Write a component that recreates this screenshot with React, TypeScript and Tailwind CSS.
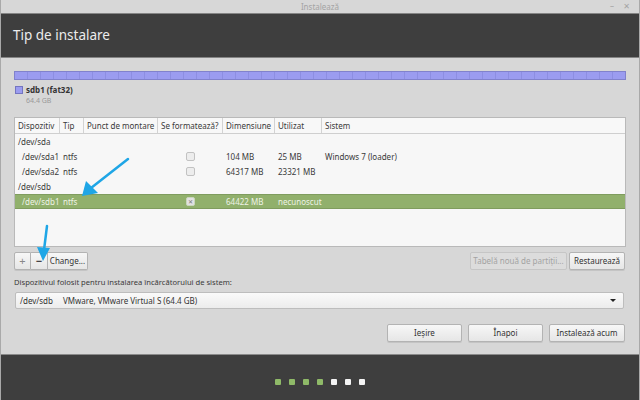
import React from "react";

const cols = [45, 24, 74, 65, 52, 47];

const heads = ["Dispozitiv", "Tip", "Punct de montare", "Se formatează?", "Dimensiune", "Utilizat", "Sistem"];

type Row = {
  dev: string;
  tip?: string;
  check?: boolean;
  size?: string;
  used?: string;
  sys?: string;
  selected?: boolean;
  disk?: boolean;
};

const rows: Row[] = [
  { dev: "/dev/sda", disk: true },
  { dev: "/dev/sda1", tip: "ntfs", check: true, size: "104 MB", used: "25 MB", sys: "Windows 7 (loader)" },
  { dev: "/dev/sda2", tip: "ntfs", check: true, size: "64317 MB", used: "23321 MB" },
  { dev: "/dev/sdb", disk: true },
  { dev: "/dev/sdb1", tip: "ntfs", check: true, size: "64422 MB", used: "necunoscut", selected: true },
];

const Btn = ({ children, className = "" }: { children: React.ReactNode; className?: string }) => (
  <div
    className={`flex items-center justify-center rounded-[2px] border border-[#b3b3b3] bg-gradient-to-b from-[#f7f7f7] to-[#e6e6e6] text-[8px] text-[#333] shadow-[0_1px_0_#c4c4c4] ${className}`}
  >
    {children}
  </div>
);

const App = () => {
  return (
    <div
      className="w-[640px] h-[400px] flex flex-col bg-[#d7d7d7] border-x border-[#a9a9a9] overflow-hidden relative"
      style={{ fontFamily: '"Noto Sans", "DejaVu Sans", sans-serif' }}
    >
      {/* title bar */}
      <div className="h-[13px] flex items-center justify-center relative text-[8px] text-[#a4a4a4]">
        Instalează
        <span className="absolute right-[25px] top-[0px] text-[8px]">–</span>
        <span className="absolute right-[9px] top-[0px] text-[8px]">✕</span>
      </div>

      {/* header */}
      <div className="h-[45px] bg-[#3e3e3e] border-y border-[#858585] flex items-center pl-[12px] text-[13.5px] text-[#ececec]">
        Tip de instalare
      </div>

      {/* content */}
      <div className="flex-1 flex flex-col px-[13px] pt-[13px]">
        <div className="h-[9px] border border-[#8182cc] bg-[repeating-linear-gradient(90deg,#9b9cf0_0px,#9b9cf0_12px,#8d8ee2_12px,#8d8ee2_13px)]" />

        <div className="flex items-start mt-[5px] ml-[1px]">
          <div className="w-[8px] h-[8px] mt-[1px] bg-[#9b9cf0] border border-[#7475c0]" />
          <div className="ml-[3px] flex flex-col">
            <span className="text-[8px] leading-[10px] font-bold text-[#333]">sdb1 (fat32)</span>
            <span className="text-[7px] leading-[11px] text-[#9a9a9a]">64.4 GB</span>
          </div>
        </div>

        {/* table */}
        <div className="mt-[11px] h-[130px] border border-[#b9b9b9] bg-[#f7f7f7] flex flex-col">
          <div className="h-[16px] flex border-b border-[#cfcfcf] bg-[#f8f8f8] text-[8px] text-[#3a3a3a]">
            {heads.map((h, i) => (
              <div
                key={h}
                className={`flex items-center pl-[3px] ${i < 6 ? "border-r border-[#d3d3d3]" : "flex-1"}`}
                style={i < 6 ? { width: cols[i] } : undefined}
              >
                {h}
              </div>
            ))}
          </div>
          {rows.map((r) => (
            <div
              key={r.dev}
              className={`h-[15px] flex items-center text-[8px] ${
                r.selected ? "bg-[#91b06c] text-[#eef3e6] border-y border-[#7f9c5e]" : "text-[#3a3a3a]"
              }`}
            >
              {r.disk ? (
                <div className="pl-[3px]">{r.dev}</div>
              ) : (
                <>
                  <div className="w-[45px] pl-[7px]">{r.dev}</div>
                  <div className="w-[24px] pl-[3px]">{r.tip}</div>
                  <div className="w-[74px]" />
                  <div className="w-[65px] flex justify-center">
                    <div
                      className={`w-[9px] h-[9px] rounded-[2px] border flex items-center justify-center text-[6px] leading-none ${
                        r.selected ? "border-[#c9d6bb] bg-[#e2e2e2] text-[#777]" : "border-[#c2c2c2] bg-[#ededed]"
                      }`}
                    >
                      {r.selected ? "✕" : ""}
                    </div>
                  </div>
                  <div className="w-[52px] pl-[3px]">{r.size}</div>
                  <div className="w-[47px] pl-[3px]">{r.used}</div>
                  <div className="flex-1 pl-[3px]">{r.sys}</div>
                </>
              )}
            </div>
          ))}
        </div>

        {/* tools row */}
        <div className="mt-[5px] flex items-center">
          <div className="flex h-[18px]">
            <Btn className="w-[17px] rounded-r-none text-[11px] text-[#888]">+</Btn>
            <Btn className="w-[17px] rounded-none border-l-0 text-[11px] font-bold text-[#444]">−</Btn>
            <Btn className="w-[40px] rounded-l-none border-l-0">Change...</Btn>
          </div>
          <div className="flex-1" />
          <div className="h-[18px] w-[97px] rounded-[2px] border border-[#c6c6c6] bg-[#dcdcdc] text-[8px] text-[#a3a3a3] flex items-center justify-center">
            Tabelă nouă de partiții...
          </div>
          <Btn className="ml-[2px] h-[18px] w-[56px] mr-[1px]">Restaurează</Btn>
        </div>

        <div className="mt-[6px] text-[7.6px] leading-[12px] text-[#3a3a3a]">
          Dispozitivul folosit pentru instalarea încărcătorului de sistem:
        </div>

        <div className="mt-[4px] mr-[2px] ml-[1px] h-[17px] rounded-[2px] border border-[#bdbdbd] bg-gradient-to-b from-[#fafafa] to-[#ececec] flex items-center pl-[4px] pr-[7px] text-[8px] text-[#333]">
          <span>/dev/sdb</span>
          <span className="ml-[10px]">VMware, VMware Virtual S (64.4 GB)</span>
          <div className="flex-1" />
          <div className="w-0 h-0 border-x-[3px] border-x-transparent border-t-[3px] border-t-[#222]" />
        </div>

        <div className="mt-[15px] flex justify-end gap-[6px] mr-[1px]">
          <Btn className="w-[75px] h-[18px]">Ieșire</Btn>
          <Btn className="w-[75px] h-[18px]">Înapoi</Btn>
          <Btn className="w-[76px] h-[18px] border-[#9cc57c]">Instalează acum</Btn>
        </div>
      </div>

      {/* footer */}
      <div className="h-[46px] bg-[#3e3e3e] border-t border-[#8a8a8a] flex items-center justify-center gap-[8px] pt-[8px]">
        {[0, 1, 2, 3, 4, 5, 6].map((i) => (
          <div
            key={i}
            className={`w-[6px] h-[6px] rounded-[1px] ${i < 4 ? "bg-[#8fba68]" : "bg-[#f4f4f4]"}`}
          />
        ))}
      </div>

      {/* annotation arrows */}
      <svg className="absolute left-0 top-0 pointer-events-none" width="640" height="400">
        <line x1="127" y1="159" x2="90" y2="188" stroke="#1fa6e6" strokeWidth="2.5" strokeLinecap="round" />
        <polygon points="81,196 85,181 97,193" fill="#1fa6e6" />
        <line x1="46" y1="226" x2="43" y2="250" stroke="#1fa6e6" strokeWidth="2.5" strokeLinecap="round" />
        <polygon points="42,261 36,247 49,248" fill="#1fa6e6" />
      </svg>
    </div>
  );
};

export default App;
